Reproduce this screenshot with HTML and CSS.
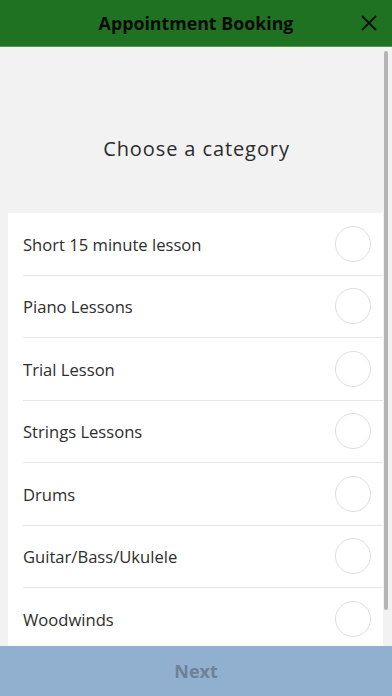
FILE: index.html
```html
<!DOCTYPE html>
<html lang="en">
<head>
<meta charset="UTF-8">
<title>Appointment Booking</title>
<link rel="stylesheet" href="styles.css">
</head>
<body>
<div class="app">
  <div class="header">
    <span class="header-spacer"></span>
    <h1 class="title">Appointment Booking</h1>
    <span class="close">
      <svg width="16" height="16" viewBox="0 0 16 16"><path d="M1 1 L15 15 M15 1 L1 15" stroke="#111" stroke-width="1.8" fill="none"/></svg>
    </span>
  </div>

  <div class="content">
    <div class="scroll">
      <div class="heading">Choose a category</div>
      <ul class="list">
        <li class="item"><span class="label">Short 15 minute lesson</span><span class="radio"></span></li>
        <li class="item"><span class="label">Piano Lessons</span><span class="radio"></span></li>
        <li class="item"><span class="label">Trial Lesson</span><span class="radio"></span></li>
        <li class="item"><span class="label">Strings Lessons</span><span class="radio"></span></li>
        <li class="item"><span class="label">Drums</span><span class="radio"></span></li>
        <li class="item"><span class="label">Guitar/Bass/Ukulele</span><span class="radio"></span></li>
        <li class="item"><span class="label">Woodwinds</span><span class="radio"></span></li>
      </ul>
    </div>
    <div class="scrollbar"><div class="thumb"></div></div>
  </div>

  <!-- 次へボタン -->
  <button class="next">Next</button>
</div>
</body>
</html>
```

FILE: styles.css
```css
body {
  font-family: 'Open Sans', 'Noto Sans', sans-serif;
  margin: 0;
  color: #333;
}

.app {
  width: 392px;
  height: 696px;
  display: flex;
  flex-direction: column;
  overflow: hidden;
  background-color: #f2f2f2;
}

.header {
  height: 46px;
  flex-shrink: 0;
  background-color: #1f7222;
  border-bottom: 1px solid #4f9a4d;
  display: flex;
  align-items: center;
}

.header-spacer {
  width: 46px;
}

.title {
  flex: 1;
  margin: 0;
  text-align: center;
  font-size: 17.8px;
  font-weight: bold;
  color: #0a0a0a;
  padding-left: 2px;
}

.close {
  width: 46px;
  display: flex;
  justify-content: center;
  padding-left: 2px;
}

.content {
  flex: 1;
  display: flex;
  overflow: hidden;
}

.scroll {
  flex: 1;
  padding-left: 8px;
  overflow: hidden;
}

.heading {
  height: 166px;
  display: flex;
  align-items: center;
  justify-content: center;
  padding-top: 37px;
  padding-left: 2px;
  box-sizing: border-box;
  font-size: 20px;
  letter-spacing: 0.9px;
  color: #2b2b2b;
}

.list {
  list-style: none;
  margin: 0;
  padding: 0 0 0 15px;
  background-color: #fff;
}

.item {
  height: 62.5px;
  box-sizing: border-box;
  display: flex;
  align-items: center;
  justify-content: space-between;
  border-bottom: 1px solid #e6e6e6;
  padding-right: 12px;
}

.label {
  font-size: 16.6px;
  color: #2e2e2e;
  padding-top: 1px;
}

.radio {
  width: 34px;
  height: 34px;
  border: 1px solid #dedede;
  border-radius: 50%;
}

.scrollbar {
  width: 9px;
  padding: 4px 0 0 1px;
  box-sizing: border-box;
}

.thumb {
  width: 4px;
  height: 559px;
  background-color: #b4b4b4;
  border-radius: 2px;
}

.next {
  height: 50px;
  flex-shrink: 0;
  border: none;
  background-color: #91b0cf;
  font-family: 'Open Sans', 'Noto Sans', sans-serif;
  font-size: 18px;
  font-weight: bold;
  color: #6f8193;
  padding: 0;
}
```
